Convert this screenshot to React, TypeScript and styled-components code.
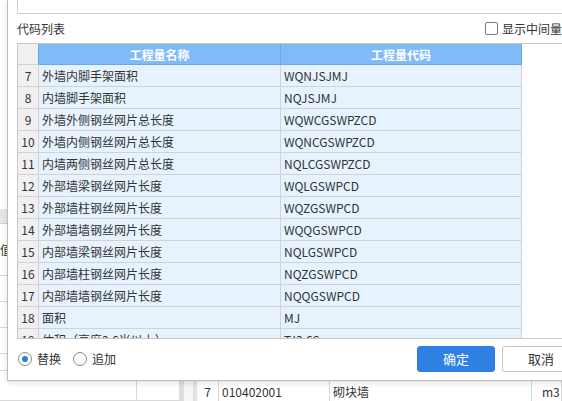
import React from "react";
import styled, { createGlobalStyle } from "styled-components";

const GlobalStyle = createGlobalStyle`
  html, body {
    margin: 0;
    padding: 0;
  }
  body {
    overflow: hidden;
    background: #fff;
    color: #333;
    font-family: "Microsoft YaHei", "Noto Sans CJK SC", "Noto Sans", sans-serif;
    font-size: 12px;
  }
`;

const Page = styled.div`
  position: relative;
  width: 562px;
  height: 401px;
  overflow: hidden;
`;

/* ---- app behind the dialog ---- */

const Backdrop = styled.div`
  display: flex;
  height: 100%;
`;

const LeftPane = styled.div`
  width: 180px;
  display: flex;
  flex-direction: column;
  background: #fff;
`;

const PaneGap = styled.div`
  height: 222px;
`;

const PaneHead = styled.div`
  height: 16px;
  box-sizing: border-box;
  background: #e6e6e6;
  border-bottom: 1px solid #d2d2d2;
`;

const PaneRow = styled.div<{ $h: number }>`
  display: grid;
  grid-template-columns: 137px 1fr;
  height: ${(p) => p.$h}px;
  flex: 0 0 auto;
  box-sizing: border-box;
  border-bottom: 1px solid #dadada;
`;

const PaneCell = styled.div`
  display: flex;
  align-items: center;
  border-right: 1px solid #dadada;
  font-size: 12px;
`;

const Splitter = styled.div`
  width: 17px;
  box-sizing: border-box;
  background: #f6f6f6;
  border-left: 4px solid #dedede;
  border-right: 4px solid #e2e2e2;
`;

const RightPane = styled.div`
  flex: 1;
  display: flex;
  flex-direction: column;
  justify-content: flex-end;
`;

const ListRow = styled.div`
  display: grid;
  grid-template-columns: 22px 111px 202px 1fr;
  height: 20px;
  border-top: 1px solid #d0d0d0;
`;

const ListCell = styled.div<{ $center?: boolean }>`
  display: flex;
  align-items: center;
  justify-content: ${(p) => (p.$center ? "center" : "flex-start")};
  padding-left: ${(p) => (p.$center ? 0 : 3)}px;
  border-right: 1px solid #d6d6d6;
  font-size: 12px;
  white-space: nowrap;
`;

const UnitCell = styled(ListCell)`
  padding-left: 10px;
`;

/* ---- dialog ---- */

const Dialog = styled.div`
  position: absolute;
  left: 7px;
  top: 0;
  width: 600px;
  height: 381px;
  box-sizing: border-box;
  padding: 0 9px;
  display: flex;
  flex-direction: column;
  background: #fff;
  border: 1px solid #bdbdbd;
  border-top: none;
  box-shadow: 0 2px 6px rgba(0, 0, 0, 0.12);
`;

const TopBox = styled.div`
  height: 14px;
  box-sizing: border-box;
  border: 1px solid #cfcfcf;
  border-top: none;
`;

const LabelBar = styled.div`
  height: 29px;
  display: flex;
  align-items: center;
  padding-right: 35px;
`;

const Caption = styled.span`
  font-size: 12px;
  color: #333;
`;

const CheckOption = styled.label`
  margin-left: auto;
  display: flex;
  align-items: center;
  gap: 4px;
  font-size: 12px;
  white-space: nowrap;
`;

const CheckBox = styled.span`
  width: 13px;
  height: 13px;
  box-sizing: border-box;
  border: 1px solid #7a7a7a;
  border-radius: 2px;
  background: #fff;
`;

const Grid = styled.div`
  height: 296px;
  box-sizing: border-box;
  border: 1px solid #c8c8c8;
  overflow: hidden;
  background: #fff;
`;

const Row = styled.div<{ $head?: boolean }>`
  display: grid;
  grid-template-columns: 21px 242px 241px;
  height: ${(p) => (p.$head ? 21 : 22)}px;
`;

const NumCell = styled.div<{ $head?: boolean }>`
  box-sizing: border-box;
  display: flex;
  align-items: center;
  justify-content: center;
  background: #f0f0f0;
  border-right: 1px solid ${(p) => (p.$head ? "#6aa7ec" : "#d2d2d2")};
  border-bottom: 1px solid ${(p) => (p.$head ? "#d2d2d2" : "#d2d2d2")};
  font-size: 12px;
  color: #333;
`;

const HeadCell = styled.div`
  box-sizing: border-box;
  display: flex;
  align-items: center;
  justify-content: center;
  background: #80bbf7;
  border-right: 1px solid #6aa7ec;
  border-bottom: 1px solid #6aa7ec;
  color: #fff;
  font-weight: bold;
  font-size: 12px;
`;

const DataCell = styled.div`
  box-sizing: border-box;
  display: flex;
  align-items: center;
  padding-left: 3px;
  background: #e6f3fe;
  border-right: 1px solid #d2d2d2;
  border-bottom: 1px solid #d2d2d2;
  font-size: 12px;
  color: #333;
  white-space: nowrap;
  overflow: hidden;
`;

const Footer = styled.div`
  flex: 1;
  display: flex;
  align-items: center;
  padding: 0 17px 2px 1px;
`;

const RadioOption = styled.label`
  display: flex;
  align-items: center;
  gap: 5px;
  margin-right: 12px;
  font-size: 12px;
`;

const Radio = styled.span<{ $on?: boolean }>`
  width: 14px;
  height: 14px;
  box-sizing: border-box;
  border-radius: 50%;
  border: 1px solid #8a8a8a;
  background: #fff;
  display: flex;
  align-items: center;
  justify-content: center;
  &::after {
    content: "";
    width: 6px;
    height: 6px;
    border-radius: 50%;
    background: ${(p) => (p.$on ? "#2b7fe1" : "transparent")};
  }
`;

const Buttons = styled.div`
  margin-left: auto;
  display: flex;
  gap: 7px;
`;

const Button = styled.button<{ $primary?: boolean }>`
  width: 78px;
  height: 26px;
  box-sizing: border-box;
  border-radius: 3px;
  border: 1px solid ${(p) => (p.$primary ? "#2b7fe1" : "#c4c4c4")};
  background: ${(p) => (p.$primary ? "#2e81e2" : "#fff")};
  color: ${(p) => (p.$primary ? "#fff" : "#333")};
  font-family: inherit;
  font-size: 13px;
  padding: 0;
`;

const rows: [number, string, string][] = [
  [7, "外墙内脚手架面积", "WQNJSJMJ"],
  [8, "内墙脚手架面积", "NQJSJMJ"],
  [9, "外墙外侧钢丝网片总长度", "WQWCGSWPZCD"],
  [10, "外墙内侧钢丝网片总长度", "WQNCGSWPZCD"],
  [11, "内墙两侧钢丝网片总长度", "NQLCGSWPZCD"],
  [12, "外部墙梁钢丝网片长度", "WQLGSWPCD"],
  [13, "外部墙柱钢丝网片长度", "WQZGSWPCD"],
  [14, "外部墙墙钢丝网片长度", "WQQGSWPCD"],
  [15, "内部墙梁钢丝网片长度", "NQLGSWPCD"],
  [16, "内部墙柱钢丝网片长度", "NQZGSWPCD"],
  [17, "内部墙墙钢丝网片长度", "NQQGSWPCD"],
  [18, "面积", "MJ"],
  [19, "体积（高度3.6米以上）", "TJ3.6S"],
];

export default function App() {
  return (
    <Page>
      <GlobalStyle />
      <Backdrop>
        <LeftPane>
          <PaneGap />
          <PaneHead />
          <PaneRow $h={52}>
            <PaneCell>值</PaneCell>
            <PaneCell />
          </PaneRow>
          <PaneRow $h={26}>
            <PaneCell />
            <PaneCell />
          </PaneRow>
          <PaneRow $h={26}>
            <PaneCell />
            <PaneCell />
          </PaneRow>
          <PaneRow $h={26}>
            <PaneCell />
            <PaneCell />
          </PaneRow>
          <PaneRow $h={17}>
            <PaneCell />
            <PaneCell />
          </PaneRow>
          <PaneRow $h={30}>
            <PaneCell />
            <PaneCell />
          </PaneRow>
        </LeftPane>
        <Splitter />
        <RightPane>
          <ListRow>
            <ListCell $center>7</ListCell>
            <ListCell>010402001</ListCell>
            <ListCell>砌块墙</ListCell>
            <UnitCell>m3</UnitCell>
          </ListRow>
        </RightPane>
      </Backdrop>

      <Dialog>
        <TopBox />
        <LabelBar>
          <Caption>代码列表</Caption>
          <CheckOption>
            <CheckBox />
            显示中间量
          </CheckOption>
        </LabelBar>
        <Grid>
          <Row $head>
            <NumCell $head />
            <HeadCell>工程量名称</HeadCell>
            <HeadCell>工程量代码</HeadCell>
          </Row>
          {rows.map(([n, name, code]) => (
            <Row key={n}>
              <NumCell>{n}</NumCell>
              <DataCell>{name}</DataCell>
              <DataCell>{code}</DataCell>
            </Row>
          ))}
        </Grid>
        <Footer>
          <RadioOption>
            <Radio $on />
            替换
          </RadioOption>
          <RadioOption>
            <Radio />
            追加
          </RadioOption>
          <Buttons>
            <Button $primary>确定</Button>
            <Button>取消</Button>
          </Buttons>
        </Footer>
      </Dialog>
    </Page>
  );
}
